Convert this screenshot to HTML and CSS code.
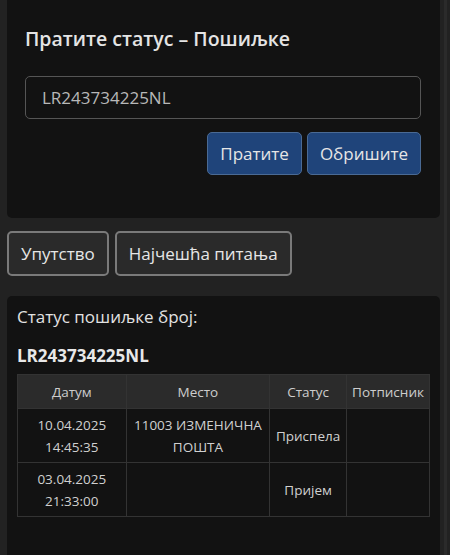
FILE: index.html
```html
<!DOCTYPE html>
<html lang="sr">
<head>
<meta charset="utf-8">
<link rel="stylesheet" href="styles.css">
</head>
<body>
<div class="page">
  <section class="card track">
    <h1 class="title">Пратите статус – Пошиљке</h1>
    <div class="field">LR243734225NL</div>
    <div class="actions">
      <button class="btn-primary">Пратите</button>
      <button class="btn-primary">Обришите</button>
    </div>
  </section>
  <nav class="links">
    <button class="btn-outline">Упутство</button>
    <button class="btn-outline">Најчешћа питања</button>
  </nav>
  <section class="card result">
    <p class="label">Статус пошиљке број:</p>
    <p class="number">LR243734225NL</p>
    <table class="history">
      <thead>
        <tr><th class="c1">Датум</th><th class="c2">Место</th><th class="c3">Статус</th><th class="c4">Потписник</th></tr>
      </thead>
      <tbody>
        <tr><td>10.04.2025<br>14:45:35</td><td>11003 ИЗМЕНИЧНА<br>ПОШТА</td><td>Приспела</td><td></td></tr>
        <tr><td>03.04.2025<br>21:33:00</td><td></td><td>Пријем</td><td></td></tr>
      </tbody>
    </table>
  </section>
</div>
</body>
</html>
```
FILE: styles.css
```css
html, body {
  margin: 0;
  padding: 0;
  height: 100%;
  overflow: hidden;
}
html {
  background: linear-gradient(to left, #222 0 3px, #2b2b2b 3px 6px, #222 6px);
}
body {
  font-family: "Open Sans", "Noto Sans", sans-serif;
  color: #e2e2e2;
}
.page {
  padding: 0 10px 0 7px;
}
.card {
  background: #121212;
  border-radius: 0 0 5px 5px;
}
.track {
  padding: 26px 19px 43px 18px;
}
.title {
  margin: 0;
  font-size: 19.5px;
  line-height: 26px;
  font-weight: 600;
  color: #e4e4e4;
}
.field {
  margin-top: 24px;
  box-sizing: border-box;
  height: 43px;
  border: 1px solid #555;
  border-radius: 5px;
  padding: 0 16px;
  font-size: 17px;
  line-height: 41px;
  color: #b8b8b8;
}
.actions {
  margin-top: 13px;
  display: flex;
  justify-content: flex-end;
  gap: 5px;
}
.btn-primary {
  font-family: inherit;
  font-size: 17px;
  height: 43px;
  padding: 0 12px;
  background: #1f447a;
  color: #e6e6e6;
  border: 1px solid #4a6a94;
  border-radius: 5px;
}
.links {
  display: flex;
  gap: 6px;
  padding: 13px 0 20px;
}
.btn-outline {
  font-family: inherit;
  font-size: 17px;
  height: 45px;
  padding: 0 12px;
  background: #2a2a2a;
  color: #e6e6e6;
  border: 2px solid #7a7a7a;
  border-radius: 5px;
}
.result {
  box-sizing: border-box;
  border-radius: 5px 5px 0 0;
  padding: 8px 10px 0 10px;
  height: 259px;
}
.label {
  margin: 0;
  font-size: 17px;
  line-height: 26px;
  color: #e2e2e2;
}
.number {
  margin: 13px 0 0;
  font-size: 17px;
  line-height: 26px;
  font-weight: 700;
  color: #e8e8e8;
}
.history {
  margin-top: 5px;
  width: 413px;
  border-collapse: collapse;
  font-size: 13.5px;
  line-height: 22px;
  color: #d0d0d0;
}
.history th, .history td {
  border: 1px solid #333;
  text-align: center;
  vertical-align: middle;
  padding: 0;
}
.history th {
  background: #2b2b2b;
  font-weight: 400;
  height: 33px;
  color: #cdcdcd;
}
.history td {
  height: 53px;
  background: #121212;
}
.c1 { width: 108px; }
.c2 { width: 143px; }
.c3 { width: 76px; }
.c4 { width: 82px; }
```
